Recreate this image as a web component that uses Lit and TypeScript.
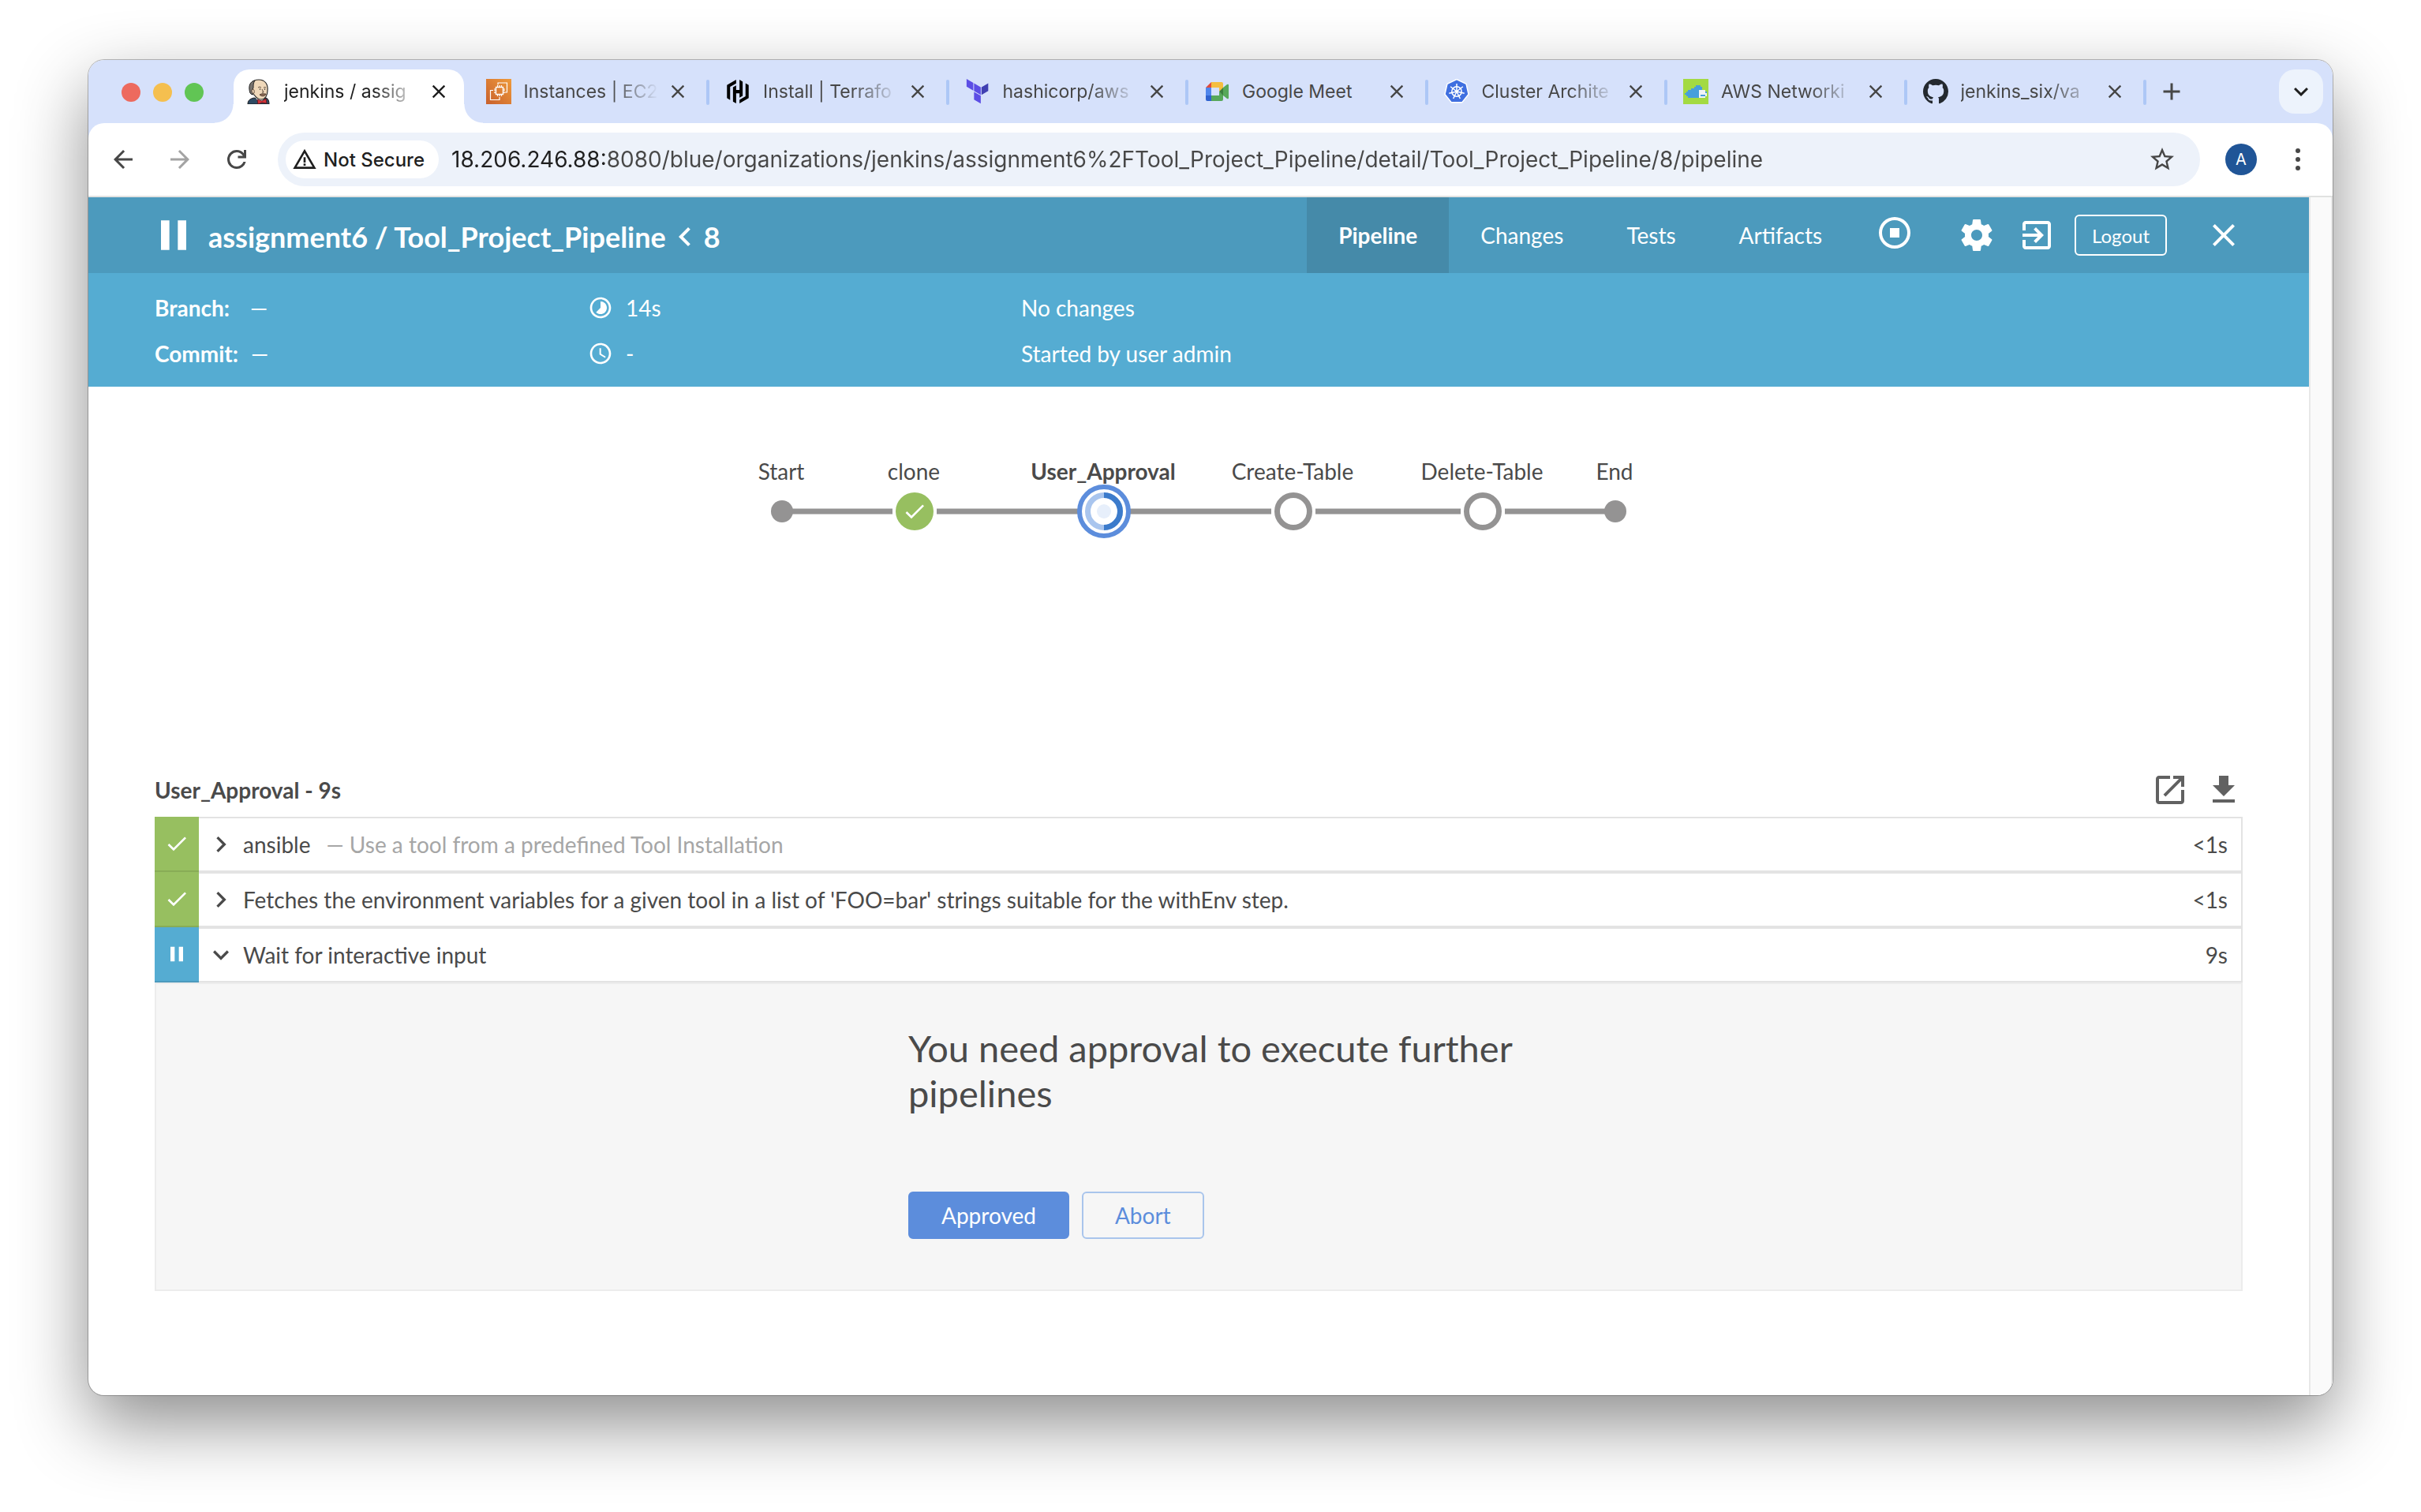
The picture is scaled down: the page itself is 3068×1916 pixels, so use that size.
import { LitElement, html, css, svg, nothing } from "lit";
import { customElement } from "lit/decorators.js";
import { classMap } from "lit/directives/class-map.js";

/* ---------- Icon helpers ---------- */

const icon = (d: string, cls = "i48") =>
  html`<svg class=${cls} viewBox="0 0 24 24" aria-hidden="true"><path fill="currentColor" d=${d}></path></svg>`;

const P = {
  pause: "M6 19h4V5H6v14zm8-14v14h4V5h-4z",
  check: "M9 16.17L4.83 12l-1.42 1.41L9 19 21 7l-1.41-1.41z",
  gear: "M19.43 12.98c.04-.32.07-.64.07-.98s-.03-.66-.07-.98l2.11-1.65c.19-.15.24-.42.12-.64l-2-3.46c-.12-.22-.39-.3-.61-.22l-2.49 1c-.52-.4-1.08-.73-1.69-.98l-.38-2.65C14.46 2.18 14.25 2 14 2h-4c-.25 0-.46.18-.49.42l-.38 2.65c-.61.25-1.17.59-1.69.98l-2.49-1c-.23-.09-.49 0-.61.22l-2 3.46c-.13.22-.07.49.12.64l2.11 1.65c-.04.32-.07.65-.07.98s.03.66.07.98l-2.11 1.65c-.19.15-.24.42-.12.64l2 3.46c.12.22.39.3.61.22l2.49-1c.52.4 1.08.73 1.69.98l.38 2.65c.03.24.24.42.49.42h4c.25 0 .46-.18.49-.42l.38-2.65c.61-.25 1.17-.59 1.69-.98l2.49 1c.23.09.49 0 .61-.22l2-3.46c.12-.22.07-.49-.12-.64l-2.11-1.65zM12 15.5c-1.93 0-3.5-1.57-3.5-3.5s1.57-3.5 3.5-3.5 3.5 1.57 3.5 3.5-1.57 3.5-3.5 3.5z",
  exit: "M10.09 15.59L11.5 17l5-5-5-5-1.41 1.41L12.67 11H3v2h9.67l-2.58 2.59zM19 3H5c-1.11 0-2 .9-2 2v4h2V5h14v14H5v-4H3v4c0 1.1.89 2 2 2h14c1.1 0 2-.9 2-2V5c0-1.1-.9-2-2-2z",
  close: "M19 6.41L17.59 5 12 10.59 6.41 5 5 6.41 10.59 12 5 17.59 6.41 19 12 13.41 17.59 19 19 17.59 13.41 12z",
  stop: "M12 2a10 10 0 1 0 0 20 10 10 0 0 0 0-20zm0 18a8 8 0 1 1 0-16 8 8 0 0 1 0 16zM9 9h6v6H9z",
  timelapse: "M16.24 7.76C15.07 6.59 13.54 6 12 6v6l-4.24 4.24c2.34 2.34 6.14 2.34 8.49 0 2.34-2.34 2.34-6.14-.01-8.48zM12 2C6.48 2 2 6.48 2 12s4.48 10 10 10 10-4.48 10-10S17.52 2 12 2zm0 18c-4.42 0-8-3.58-8-8s3.58-8 8-8 8 3.58 8 8-3.58 8-8 8z",
  clock: "M11.99 2C6.47 2 2 6.48 2 12s4.47 10 9.99 10C17.52 22 22 17.52 22 12S17.52 2 11.99 2zM12 20c-4.42 0-8-3.58-8-8s3.58-8 8-8 8 3.58 8 8-3.58 8-8 8zm.5-13H11v6l5.25 3.15.75-1.23-4.5-2.67z",
  right: "M10 6L8.59 7.41 13.17 12l-4.58 4.59L10 18l6-6z",
  left: "M15.41 7.41L14 6l-6 6 6 6 1.41-1.41L10.83 12z",
  down: "M16.59 8.59L12 13.17 7.41 8.59 6 10l6 6 6-6z",
  open: "M19 19H5V5h7V3H5c-1.11 0-2 .9-2 2v14c0 1.1.89 2 2 2h14c1.1 0 2-.9 2-2v-7h-2v7zM14 3v2h3.59l-9.83 9.83 1.41 1.41L19 6.41V10h2V3h-7z",
  download: "M19 9h-4V3H9v6H5l7 7 7-7zM5 18v2h14v-2H5z",
  back: "M20 11H7.83l5.59-5.59L12 4l-8 8 8 8 1.41-1.41L7.83 13H20v-2z",
  forward: "M12 4l-1.41 1.41L16.17 11H4v2h12.17l-5.58 5.59L12 20l8-8z",
  reload: "M12 20q-3.35 0-5.675-2.325T4 12q0-3.35 2.325-5.675T12 4q1.725 0 3.3.7125T18 6.75V4h2v7h-7V9h4.2q-.8-1.4-2.1875-2.2T12 6Q9.5 6 7.75 7.75T6 12q0 2.5 1.75 4.25T12 18q1.925 0 3.475-1.1T17.65 14h2.1q-.7 2.65-2.85 4.325T12 20z",
  warn: "M1 21h22L12 2 1 21zm3.45-2L12 6l7.55 13H4.45zM11 16h2v2h-2zM11 10h2v5h-2z",
  star: "M22 9.24l-7.19-.62L12 2 9.19 8.63 2 9.24l5.46 4.73L5.82 21 12 17.27 18.18 21l-1.63-7.03L22 9.24zM12 15.4l-3.76 2.27 1-4.28-3.32-2.88 4.38-.38L12 6.1l1.71 4.04 4.38.38-3.32 2.88 1 4.28L12 15.4z",
  plus: "M19 13h-6v6h-2v-6H5v-2h6V5h2v6h6v2z",
};

/* ---------- Favicons, all on a 32 unit grid ---------- */

const around = (n: number, r: number, cx = 16, cy = 16) =>
  Array.from({ length: n }, (_, i) => {
    const a = (Math.PI * 2 * i) / n - Math.PI / 2;
    return [cx + r * Math.cos(a), cy + r * Math.sin(a)];
  });

const favicons = {
  jenkins: svg`
    <path d="M2 32c0-5 3-7 8-8l9 2 6-2c3 1 4 4 4 8z" fill="#2f4a63" stroke="#1b1b1b"></path>
    <path d="M12 24l5 7 6-6-1-4H12z" fill="#f3f0ea"></path>
    <path d="M6 17C3 7 7 1 16 1c8 0 12 6 11 14 0 6-3 11-8 11-4 0-7-3-9-6-2 0-4-1-4-3z" fill="#efd8ba" stroke="#262626" stroke-width="1.2"></path>
    <path d="M5 18C2 9 5 3 11 2c-2 3-2 6-2 9l-1 3 1 5c-2 1-3 0-4-1z" fill="#77736f" stroke="#262626"></path>
    <path d="M7 14c2-2 4 0 3 4-2 1-3-1-3-4z" fill="#efd8ba" stroke="#4a3527" stroke-width=".8"></path>
    <path d="M15 11q2-2 4 0M22 11q2-1 3 0M20 13l2 4h-2" fill="none" stroke="#3a2a20" stroke-width=".8"></path>
    <circle cx="17.500" cy="13" r=".8" fill="#222"></circle><circle cx="23.500" cy="13" r=".8" fill="#222"></circle>
    <path d="M17 20c3-2 6-1 8-1-1 3-5 4-8 1z" fill="#8f6b56" stroke="#3a2a20" stroke-width=".8"></path>
    <path d="M14 26l6 2 5-3 1 6-6-1-5 2z" fill="#d3343a" stroke="#5a1216" stroke-width=".8"></path>`,
  ec2: svg`
    <defs><linearGradient id="ec2" x1="0" y1="1" x2="1" y2="0"><stop offset="0" stop-color="#c8602d"></stop><stop offset="1" stop-color="#ef9a3a"></stop></linearGradient></defs>
    <rect width="32" height="32" fill="url(#ec2)"></rect>
    <g fill="none" stroke="#fff" stroke-width="1.200">
      <rect x="12.500" y="10.500" width="9" height="9" stroke-width="1.400"></rect>
      <path d="M14.500 8v2.500M17 8v2.500M19.500 8v2.500M14.500 19.500V22M17 19.500V22M19.500 19.500V22M10 13h2.500M10 15h2.500M10 17.500h2.500M21.500 13H24M21.500 15H24M21.500 17.500H24"></path>
      <path d="M15 7.500V5h11.500v12H24M9 14.500H5.500v12H17V23"></path>
    </g>`,
  hashicorp: svg`<g transform="translate(1 1) scale(1.25)" fill="#000"><path d="M10.300 0L1 5.400v13.200l3.200 1.900V7.200l6.100-3.500z"></path><path d="M7.100 7.600l3.200-1.800v4.500h3.400V0l3.200 1.900v14.500l-3.200 1.800v-4.500h-3.400V24l-3.200-1.900z"></path><path d="M13.700 24l9.300-5.400V5.400l-3.200-1.900v13.300l-6.100 3.500z"></path></g>`,
  terraform: svg`<g transform="scale(1.300)"><path d="M1.440 0v7.575l6.561 3.790V3.787zM8.720 4.230v7.575l6.561 3.787V8.018zM8.720 12.635v7.575L15.280 24v-7.578z" fill="#5c4ee5"></path><path d="M22.560 4.227l-6.561 3.791v7.574l6.560-3.787z" fill="#4040b2"></path></g>`,
  meet: svg`
    <path d="M2 11l7-7v7z" fill="#e04a3c"></path>
    <path d="M9 4h13q2 0 2 2v6l-5 4v-5H9z" fill="#f5be3f"></path>
    <path d="M2 11h7v10H2z" fill="#4f86ec"></path>
    <path d="M2 21h7v7H4q-2 0-2-2z" fill="#2f62cf"></path>
    <path d="M9 21h10v-5l5 4v6q0 2-2 2H9z" fill="#57a85a"></path>
    <path d="M19 16l5-5v10z" fill="#3b7f3f"></path>
    <path d="M24 11l5-4q2-1 2 1v16q0 2-2 1l-5-4z" fill="#57a85a"></path>`,
  kubernetes: svg`
    <polygon points=${around(7, 15.4).map((p) => p.join(",")).join(" ")} fill="#3f6fe0" stroke="#fff" stroke-width="1.500" stroke-linejoin="round"></polygon>
    <g stroke="#fff" fill="none" stroke-width="1.500">
      <circle cx="16" cy="16" r="6.200"></circle>
      ${around(7, 10).map(([x, y]) => svg`<line x1="16" y1="16" x2=${x} y2=${y}></line>`)}
    </g>
    <circle cx="16" cy="16" r="1.800" fill="#fff"></circle>`,
  aws: svg`
    <rect width="32" height="32" fill="#a3da42"></rect>
    <path d="M2 18h2v-2h2v-2h4v-2h4v-2h2V8h6v2h2v4h4v8h-6v2H6v-2H4v-2H2z" fill="#479fdc"></path>
    <path d="M20 14h8v2h2v6h-2v2h-8z" fill="#f1f3f4"></path>
    <path d="M22 20h6v2h-6zM28 16h2v2h-2z" fill="#479fdc"></path>`,
  github: svg`<g transform="scale(2)"><path fill="#24292f" d="M8 0C3.580 0 0 3.580 0 8c0 3.540 2.290 6.530 5.470 7.590.4.070.55-.17.55-.38 0-.19-.01-.82-.01-1.490-2.010.37-2.530-.49-2.690-.94-.09-.23-.48-.94-.82-1.130-.28-.15-.68-.52-.01-.53.63-.01 1.080.58 1.230.82.72 1.210 1.870.87 2.330.66.07-.52.28-.87.51-1.070-1.780-.2-3.640-.89-3.640-3.950 0-.87.31-1.590.82-2.150-.08-.2-.36-1.020.08-2.120 0 0 .67-.21 2.200.82.64-.18 1.320-.27 2-.27s1.360.09 2 .27c1.530-1.040 2.200-.82 2.200-.82.44 1.100.16 1.920.08 2.120.51.56.82 1.270.82 2.150 0 3.070-1.870 3.750-3.650 3.950.29.25.54.73.54 1.480 0 1.070-.01 1.930-.01 2.200 0 .21.15.46.55.38A8.010 8.010 0 0 0 16 8c0-4.420-3.580-8-8-8z"></path></g>`,
};

const tabs: { icon: keyof typeof favicons; title: string; active?: boolean }[] = [
  { icon: "jenkins", title: "jenkins / assig", active: true },
  { icon: "ec2", title: "Instances | EC2" },
  { icon: "hashicorp", title: "Install | Terrafo" },
  { icon: "terraform", title: "hashicorp/aws" },
  { icon: "meet", title: "Google Meet" },
  { icon: "kubernetes", title: "Cluster Archite" },
  { icon: "aws", title: "AWS Networki" },
  { icon: "github", title: "jenkins_six/va" },
];

/* ---------- Browser chrome ---------- */

@customElement("browser-chrome")
export class BrowserChrome extends LitElement {
  static styles = css`
    :host { display: block; font-family: Inter, "Liberation Sans", sans-serif; color: #474747; background: #d6e1fb; }
    button { font: inherit; color: inherit; background: none; border: 0; padding: 0; cursor: pointer; display: grid; place-items: center; flex: none; }
    svg { display: block; flex: none; }
    .strip { display: flex; align-items: flex-start; height: 68px; padding: 12px 12px 0 42px; }
    .lights { display: flex; gap: 16px; padding: 17px 38px 0 0; }
    .light { width: 24px; height: 24px; border-radius: 50%; }
    .red { background: #ed6a5e; }
    .amber { background: #f5bf4f; }
    .green { background: #61c554; }
    .tabs { display: flex; flex: 0 1 2428px; min-width: 0; margin: 0; padding: 0; list-style: none; }
    .slot { display: flex; flex: 1 1 0; min-width: 0; }
    .tab { position: relative; flex: 1; min-width: 0; display: flex; align-items: center; height: 56px; padding: 0 16px; }
    .active { background: #fff; height: 68px; box-sizing: border-box; padding-bottom: 12px; border-radius: 20px 20px 0 0; color: #1f1f1f; }
    .active::before, .active::after { content: ""; position: absolute; bottom: 0; width: 24px; height: 24px; }
    .active::before { right: 100%; background: radial-gradient(circle at 0 0, transparent 23px, #fff 24px); }
    .active::after { left: 100%; background: radial-gradient(circle at 100% 0, transparent 23px, #fff 24px); }
    .fav { width: 32px; height: 32px; }
    .title { flex: 1; min-width: 0; margin: 0 0 0 16px; white-space: nowrap; font-size: 23px; line-height: 32px; color: inherit; text-decoration: none; }
    .fade { -webkit-mask-image: linear-gradient(to left, transparent 8px, #000 68px); mask-image: linear-gradient(to left, transparent 8px, #000 68px); }
    .sep { width: 4px; height: 32px; margin: 13px 4px 0; border-radius: 2px; background: #adc7f6; flex: none; }
    .off { visibility: hidden; }
    .i28 { width: 28px; height: 28px; }
    .i32 { width: 32px; height: 32px; }
    .i36 { width: 36px; height: 36px; }
    .x { width: 32px; height: 32px; }
    .new { width: 56px; height: 56px; }
    .menu { width: 56px; height: 56px; margin-left: auto; border-radius: 20px; background: #edf3fc; color: #1f1f1f; }
    .bar { display: flex; align-items: center; height: 92px; background: #fff; border-radius: 20px 20px 0 0; border-bottom: 2px solid #e1e2e1; padding: 0 24px 0 20px; }
    .nav { width: 48px; height: 48px; margin-right: 24px; }
    .dim { color: #a3a3a3; }
    .last { margin-right: 28px; }
    .omni { flex: 1; min-width: 0; height: 68px; border-radius: 34px; background: #edf2fa; display: flex; align-items: center; padding: 0 24px 0 10px; }
    .chip { display: flex; align-items: center; gap: 8px; height: 48px; padding: 0 18px 0 8px; border-radius: 24px; background: #fff; color: #1f1f1f; font-size: 24px; font-weight: 500; }
    .url { flex: 1; min-width: 0; margin: 0 16px; padding: 0; border: 0; outline: 0; font: 28px/40px Inter, "Liberation Sans", sans-serif; color: transparent; background: linear-gradient(to right, #1f1f1f 198px, #474747 198px); -webkit-background-clip: text; background-clip: text; }
    .star { width: 48px; height: 48px; }
    .avatar { width: 40px; height: 40px; margin: 0 32px; border-radius: 50%; background: #205597; color: #fff; font-size: 20px; }
    .more { width: 40px; height: 48px; }
  `;

  render() {
    return html`
      <div class="strip">
        <div class="lights"><span class="light red"></span><span class="light amber"></span><span class="light green"></span></div>
        <ul class="tabs">
          ${tabs.map((t) => html`<li class="slot">
            <div class=${classMap({ tab: true, active: !!t.active })}>
              <svg class="fav" viewBox="0 0 32 32" aria-hidden="true">${favicons[t.icon]}</svg>
              <a class=${classMap({ title: true, fade: t.icon !== "meet" })} href="#">${t.title}</a>
              <button class="x" aria-label="Close tab">${icon(P.close, "i28")}</button>
            </div>
            <span class=${classMap({ sep: true, off: !!t.active })}></span>
          </li>`)}
        </ul>
        <button class="new" aria-label="New tab">${icon(P.plus, "i36")}</button>
        <button class="menu" aria-label="Search tabs">${icon(P.down, "i36")}</button>
      </div>
      <div class="bar">
        <button class="nav" aria-label="Back">${icon(P.back, "i36")}</button>
        <button class="nav dim" aria-label="Forward">${icon(P.forward, "i36")}</button>
        <button class="nav last" aria-label="Reload">${icon(P.reload, "i36")}</button>
        <div class="omni">
          <button class="chip">${icon(P.warn, "i32")}<span>Not Secure</span></button>
          <input class="url" type="text" aria-label="Address" .value=${"18.206.246.88:8080/blue/organizations/jenkins/assignment6%2FTool_Project_Pipeline/detail/Tool_Project_Pipeline/8/pipeline"} />
          <button class="star" aria-label="Bookmark">${icon(P.star, "i36")}</button>
        </div>
        <button class="avatar" aria-label="Profile">A</button>
        <button class="more" aria-label="Menu"><svg class="i32" viewBox="0 0 32 32"><g fill="currentColor"><circle cx="16" cy="5" r="3"></circle><circle cx="16" cy="16" r="3"></circle><circle cx="16" cy="27" r="3"></circle></g></svg></button>
      </div>`;
  }
}

/* ---------- Pipeline graph ---------- */

type Kind = "cap" | "done" | "running" | "todo";
const stages: { name: string; x: number; kind: Kind }[] = [
  { name: "Start", x: 42, kind: "cap" },
  { name: "clone", x: 210, kind: "done" },
  { name: "User_Approval", x: 450, kind: "running" },
  { name: "Create-Table", x: 690, kind: "todo" },
  { name: "Delete-Table", x: 930, kind: "todo" },
  { name: "End", x: 1098, kind: "cap" },
];
const reach: Record<Kind, number> = { cap: 12, done: 28, running: 32, todo: 28 };

@customElement("pipeline-graph")
export class PipelineGraph extends LitElement {
  static styles = css`
    :host { display: block; font-family: Lato, "Liberation Sans", sans-serif; }
    .graph { display: block; width: 1140px; height: 120px; margin: 0 auto; overflow: visible; }
    .label { font-size: 28px; fill: #4a4a4a; text-anchor: middle; }
    .bold { font-weight: 700; }
    .line { stroke: #949393; stroke-width: 7; }
    .cap { fill: #949393; }
    .done { fill: #97bf60; }
    .todo { fill: #fff; stroke: #949393; stroke-width: 7; }
    .halo { fill: #fff; stroke: #5c8ddc; stroke-width: 6; }
    .track { fill: none; stroke: #a9c5ee; stroke-width: 7; }
    .arc { fill: none; stroke: #3c7bcb; stroke-width: 7; }
    .core { fill: #e7effb; }
  `;

  node(x: number, kind: Kind) {
    const y = 78;
    switch (kind) {
      case "cap":
        return svg`<circle class="cap" cx=${x} cy=${y} r="14"></circle>`;
      case "done":
        return svg`<circle class="done" cx=${x} cy=${y} r="24"></circle>
          <g transform="translate(${x - 16} ${y - 16}) scale(1.333)"><path fill="#fff" d=${P.check}></path></g>`;
      case "running":
        return svg`<circle class="halo" cx=${x} cy=${y} r="31"></circle>
          <circle class="track" cx=${x} cy=${y} r="20.500"></circle>
          <path class="arc" d="M${x} ${y - 20.5}a20.500 20.500 0 0 1 0 41"></path>
          <circle class="core" cx=${x} cy=${y} r="9"></circle>`;
      default:
        return svg`<circle class="todo" cx=${x} cy=${y} r="20.500"></circle>`;
    }
  }

  render() {
    return html`<svg class="graph" viewBox="0 0 1140 120" role="img" aria-label="Pipeline stages">
      ${stages.slice(1).map((s, i) => svg`<line class="line" x1=${stages[i].x + reach[stages[i].kind]} y1="78" x2=${s.x - reach[s.kind]} y2="78"></line>`)}
      ${stages.map((s) => this.node(s.x, s.kind))}
      ${stages.map((s) => svg`<text class=${classMap({ label: true, bold: s.kind === "running" })} x=${s.x - 1} y="38">${s.name}</text>`)}
    </svg>`;
  }
}

/* ---------- Run details page ---------- */

const steps = [
  { label: "ansible", note: "— Use a tool from a predefined Tool Installation", time: "<1s", state: "ok" },
  { label: "Fetches the environment variables for a given tool in a list of 'FOO=bar' strings suitable for the withEnv step.", note: "", time: "<1s", state: "ok" },
  { label: "Wait for interactive input", note: "", time: "9s", state: "paused" },
];

@customElement("run-page")
export class RunPage extends LitElement {
  static styles = css`
    :host { display: block; font-family: Lato, "Liberation Sans", sans-serif; font-size: 28px; color: #4a4a4a; }
    button { font: inherit; color: inherit; background: none; border: 0; padding: 0; cursor: pointer; }
    a { color: inherit; text-decoration: none; }
    svg { display: block; flex: none; }
    .i32 { width: 32px; height: 32px; }
    .i36 { width: 36px; height: 36px; }
    .i40 { width: 40px; height: 40px; }
    .i48 { width: 48px; height: 48px; }
    .i64 { width: 64px; height: 64px; }
    .head { display: flex; align-items: center; height: 96px; padding: 0 84px; background: #4c9abd; color: #fff; }
    .big { margin-left: -8px; }
    .name { display: flex; align-items: center; margin: 0 auto 0 12px; padding-top: 4px; font-size: 36px; line-height: 44px; font-weight: 700; }
    .tabs { display: flex; align-self: stretch; margin-right: 28px; }
    .tab { display: flex; align-items: center; padding: 0 40px; }
    .on { background: #458aa9; font-weight: 700; }
    .act { display: grid; place-items: center; width: 48px; height: 48px; }
    .stop { margin: 0 56px 6px 0; }
    .gear { margin-right: 28px; }
    .logout { height: 52px; margin: 0 48px 0 24px; padding: 0 20px; border: 2px solid #fff; border-radius: 6px; font-size: 24px; }
    .facts { display: grid; grid-template-columns: 549fr 549fr 1548fr; grid-auto-rows: 58px; align-items: center; padding: 15px 84px 13px; background: #55acd2; color: #fff; }
    .fact { display: flex; align-items: center; gap: 16px; }
    .key { font-weight: 700; min-width: 105px; }
    .flow { padding: 80px 84px 287px; }
    .log { padding: 0 84px 132px; }
    .bar { display: flex; align-items: center; gap: 20px; margin-bottom: 10px; }
    .stage { flex: 1; margin: 0; font-size: 28px; line-height: 48px; font-weight: 700; }
    .bar .act { color: #616161; }
    .steps { margin: 0; padding: 0; list-style: none; }
    .step { display: flex; height: 70px; }
    .mark { display: grid; place-items: center; width: 56px; box-sizing: border-box; color: #fff; border-bottom: 2px solid; }
    .ok { background: #97bf60; border-color: #88ac56; }
    .paused { background: #55acd2; border-color: #4c9abd; }
    .row { flex: 1; display: flex; align-items: center; min-width: 0; box-sizing: border-box; padding: 0 17px 0 8px; border: solid #e3e3e3; border-width: 2px 2px 2px 0; text-align: left; line-height: 32px; }
    .text { margin-left: 8px; }
    .note { margin-left: 20px; color: #a6a6a6; }
    .time { margin-left: auto; }
    .panel { border: 2px solid #ececec; background: #f6f6f6; padding: 53px 0 64px; }
    .form { width: 832px; max-width: 100%; box-sizing: border-box; padding-left: 48px; margin: 0 auto; }
    .ask { margin: 0 0 96px; font-size: 47px; line-height: 57px; font-weight: 400; }
    .acts { display: flex; gap: 16px; }
    .btn { height: 60px; padding: 0 40px; border: 2px solid #a9c5ec; border-radius: 6px; color: #5c8ddc; }
    .main { background: #5c8ddc; border-color: #5c8ddc; color: #fff; }
  `;

  render() {
    return html`
      <header class="head">
        <span class="big">${icon(P.pause, "i64")}</span>
        <h1 class="name"><a href="#">assignment6 / Tool_Project_Pipeline</a>${icon(P.left, "i48")}<span>8</span></h1>
        <nav class="tabs">
          <a class="tab on" href="#">Pipeline</a><a class="tab" href="#">Changes</a><a class="tab" href="#">Tests</a><a class="tab" href="#">Artifacts</a>
        </nav>
        <button class="act stop" aria-label="Stop">${icon(P.stop)}</button>
        <button class="act gear" aria-label="Settings">${icon(P.gear)}</button>
        <a class="act" href="#" aria-label="Go to classic">${icon(P.exit)}</a>
        <button class="logout">Logout</button>
        <button class="act" aria-label="Close">${icon(P.close)}</button>
      </header>
      <section class="facts">
        <div class="fact"><span class="key">Branch:</span><span>—</span></div>
        <div class="fact">${icon(P.timelapse, "i32")}<span>14s</span></div>
        <div class="fact">No changes</div>
        <div class="fact"><span class="key">Commit:</span><span>—</span></div>
        <div class="fact">${icon(P.clock, "i32")}<span>-</span></div>
        <div class="fact">Started by user admin</div>
      </section>
      <section class="flow"><pipeline-graph></pipeline-graph></section>
      <section class="log">
        <div class="bar">
          <h2 class="stage">User_Approval - 9s</h2>
          <a class="act" href="#" aria-label="Open log">${icon(P.open)}</a>
          <a class="act" href="#" aria-label="Download log">${icon(P.download)}</a>
        </div>
        <ul class="steps">
          ${steps.map((s) => html`<li class="step">
            <span class="mark ${s.state}">${icon(s.state === "ok" ? P.check : P.pause, "i32")}</span>
            <button class="row">
              ${icon(s.state === "ok" ? P.right : P.down, "i40")}
              <span class="text">${s.label}</span>
              ${s.note ? html`<span class="note">${s.note}</span>` : nothing}
              <span class="time">${s.time}</span>
            </button>
          </li>`)}
        </ul>
        <div class="panel">
          <div class="form">
            <h3 class="ask">You need approval to execute further pipelines</h3>
            <div class="acts"><button class="btn main">Approved</button><button class="btn">Abort</button></div>
          </div>
        </div>
      </section>`;
  }
}

@customElement("app-root")
export class AppRoot extends LitElement {
  static styles = css`
    :host { display: flex; box-sizing: border-box; min-height: 100vh; padding: 76px 112px 148px; background: #fff; }
    .window { flex: 1; min-width: 0; display: flex; flex-direction: column; border-radius: 20px; overflow: hidden; background: #fff; box-shadow: 0 0 0 1px rgba(0, 0, 0, 0.25), 0 36px 90px rgba(0, 0, 0, 0.45); }
    .view { flex: 1; display: flex; }
    .page { flex: 1; min-width: 0; }
    .scroll { width: 26px; background: #fafafa; border: solid #e8e8e8; border-width: 0 2px; }
  `;

  render() {
    return html`<div class="window">
      <browser-chrome></browser-chrome>
      <div class="view"><run-page class="page"></run-page><div class="scroll"></div></div>
    </div>`;
  }
}
